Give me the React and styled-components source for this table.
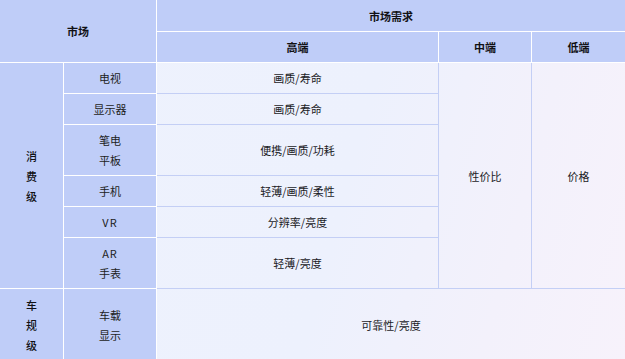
import React from 'react'
import styled, { createGlobalStyle } from 'styled-components'

const GlobalStyle = createGlobalStyle`
  html, body {
    margin: 0;
    padding: 0;
    background: #ffffff;
    overflow: hidden;
  }
  body {
    font-family: "Noto Sans CJK SC", "Noto Sans", sans-serif;
    color: #1b1b1f;
  }
`

const Grid = styled.div`
  display: grid;
  grid-template-columns: 64px 93px 282px 93px 93px;
  grid-template-rows: 32px 31px 31px 31px 51px 31px 31px 51px 72px;
  width: 625px;
  background: linear-gradient(105deg, #eef2fd 0%, #edf1fd 55%, #f3f1fb 80%, #f7f2fb 100%);
`

const Cell = styled.div`
  box-sizing: border-box;
  grid-column: ${p => p.$col};
  grid-row: ${p => p.$row};
  display: flex;
  flex-direction: column;
  align-items: center;
  justify-content: center;
  font-size: 11px;
  line-height: 20px;
  text-align: center;
  border-right: ${p => (p.$noRight ? 'none' : '1px solid')};
  border-bottom: 1px solid;
`

const HeadCell = styled(Cell)`
  background: #bfcdf8;
  border-color: #ffffff;
  font-weight: 700;
  color: #111114;
`

const SideCell = styled(Cell)`
  background: #bfcdf8;
  border-color: #ffffff;
  color: #1d1d22;
`

const GroupCell = styled(SideCell)`
  font-weight: 500;
  color: #111114;
`

const BodyCell = styled(Cell)`
  background: transparent;
  border-color: #c4cff5;
`

const Spaced = styled.span`
  letter-spacing: 1px;
`

const Lines = ({ lines }) =>
  lines.map((line, i) => <span key={i}>{line}</span>)

const devices = [
  { row: '3 / 4', label: ['电视'], need: '画质/寿命' },
  { row: '4 / 5', label: ['显示器'], need: '画质/寿命' },
  { row: '5 / 6', label: ['笔电', '平板'], need: '便携/画质/功耗' },
  { row: '6 / 7', label: ['手机'], need: '轻薄/画质/柔性' },
  { row: '7 / 8', label: [<Spaced key="vr">VR</Spaced>], need: '分辨率/亮度' },
  { row: '8 / 9', label: [<Spaced key="ar">AR</Spaced>, '手表'], need: '轻薄/亮度' },
]

const App = () => (
  <>
    <GlobalStyle />
    <Grid>
      <HeadCell $col="1 / 3" $row="1 / 3">市场</HeadCell>
      <HeadCell $col="3 / 6" $row="1 / 2" $noRight>市场需求</HeadCell>
      <HeadCell $col="3 / 4" $row="2 / 3">高端</HeadCell>
      <HeadCell $col="4 / 5" $row="2 / 3">中端</HeadCell>
      <HeadCell $col="5 / 6" $row="2 / 3" $noRight>低端</HeadCell>

      <GroupCell $col="1 / 2" $row="3 / 9">
        <Lines lines={['消', '费', '级']} />
      </GroupCell>
      {devices.map(d => (
        <React.Fragment key={d.row}>
          <SideCell $col="2 / 3" $row={d.row}>
            <Lines lines={d.label} />
          </SideCell>
          <BodyCell $col="3 / 4" $row={d.row}>{d.need}</BodyCell>
        </React.Fragment>
      ))}
      <BodyCell $col="4 / 5" $row="3 / 9">性价比</BodyCell>
      <BodyCell $col="5 / 6" $row="3 / 9" $noRight>价格</BodyCell>

      <GroupCell $col="1 / 2" $row="9 / 10">
        <Lines lines={['车', '规', '级']} />
      </GroupCell>
      <SideCell $col="2 / 3" $row="9 / 10">
        <Lines lines={['车载', '显示']} />
      </SideCell>
      <BodyCell $col="3 / 6" $row="9 / 10" $noRight>可靠性/亮度</BodyCell>
    </Grid>
  </>
)

export default App
